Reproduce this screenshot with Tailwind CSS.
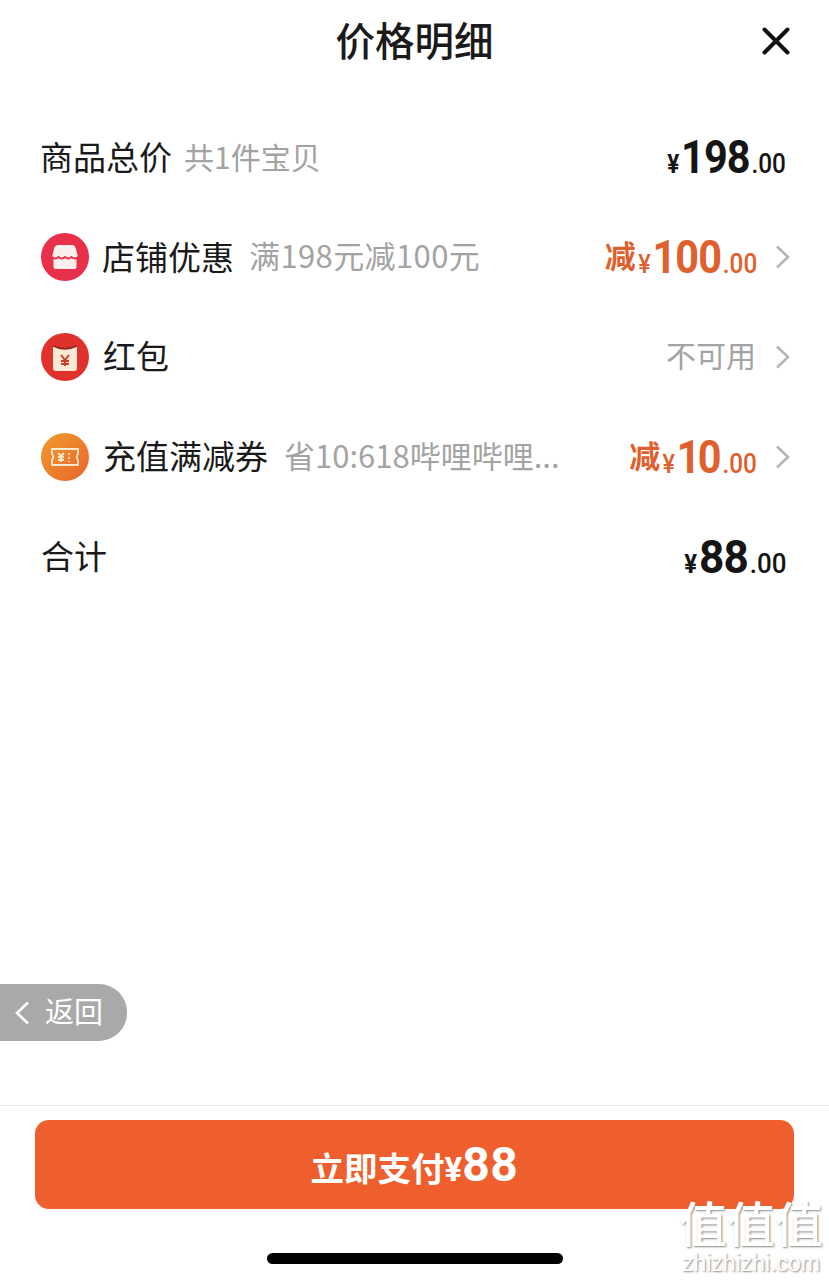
<!DOCTYPE html>
<html lang="zh-CN">
  <head>
    <meta charset="UTF-8" />
    <title>价格明细</title>
    <script src="https://cdn.jsdelivr.net/npm/@tailwindcss/browser@4"></script>
  </head>
  <body class="bg-white">
    <div class="relative w-[829px] h-[1281px] flex flex-col font-['Noto_Sans_CJK_SC',sans-serif] text-[#1a1a1a] overflow-hidden">
      <!-- Header -->
      <div class="relative h-[83px] flex items-center justify-center">
        <h1 class="text-[39.500px] leading-none font-medium pb-[6px]">价格明细</h1>
        <svg class="absolute left-[762px] top-[27px]" width="28" height="28" viewBox="0 0 28 28" fill="none" stroke="#111" stroke-width="4" stroke-linecap="round">
          <path d="M2.500 2.500 25.500 25.500M25.500 2.500 2.500 25.500" />
        </svg>
      </div>

      <!-- Rows -->
      <div class="mt-[24px] px-[41px] flex flex-col">
        <div class="h-[100px] flex items-center">
          <span class="-ml-[1px] text-[33px] leading-none pb-[2px]">商品总价</span>
          <span class="ml-[12px] text-[30px] leading-none text-[#a3a3a3] pb-[3px]">共1件宝贝</span>
          <div class="ml-auto mr-[2px] flex items-baseline origin-right scale-x-[0.9] font-['Roboto',sans-serif] font-bold text-[#151515]">
            <span class="text-[25px] leading-none">¥</span>
            <span class="text-[46px] leading-none tracking-[-1px] ml-[2px]">198</span>
            <span class="text-[27px] font-medium leading-none ml-[2px]">.00</span>
          </div>
        </div>

        <div class="h-[100px] flex items-center">
          <div class="w-[48px] h-[48px] rounded-full bg-[#e8304a] flex items-center justify-center shrink-0">
            <svg width="26" height="26" viewBox="0 0 26 26">
              <path d="M6 1h14q3 0 4 4l1.500 6q.5 3-1 3v9q0 2-2 2H3.500q-2 0-2-2v-9q-1.500 0-1-3L2 5q1-4 4-4z" fill="#fdf0ec" />
              <path d="M0 13q3.250 3 6.500 0 3.250 3 6.500 0 3.250 3 6.500 0 3.250 3 6.500 0" fill="none" stroke="#e8304a" stroke-width="1.800" />
            </svg>
          </div>
          <span class="ml-[13px] text-[33px] leading-none pb-[2px]">店铺优惠</span>
          <span class="ml-[15px] text-[31px] leading-none tracking-[0.4px] text-[#a3a3a3] pb-[6px]">满198元减100元</span>
          <span class="ml-auto text-[31px] leading-none font-bold text-[#e0602d] pb-[6px]">减</span>
          <div class="-ml-[11px] flex items-baseline origin-right scale-x-[0.9] font-['Roboto',sans-serif] font-bold text-[#e0602d]">
            <span class="text-[26px] font-medium leading-none">¥</span>
            <span class="text-[46px] leading-none tracking-[-1px] ml-[2px]">100</span>
            <span class="text-[27px] font-medium leading-none ml-[2px]">.00</span>
          </div>
          <svg class="ml-[18px] -mr-[2px]" width="15" height="24" viewBox="0 0 15 24" fill="none" stroke="#b5b5b5" stroke-width="2.600">
            <path d="M2 1.500 13 12 2 22.500" />
          </svg>
        </div>

        <div class="h-[100px] flex items-center">
          <div class="w-[48px] h-[48px] rounded-full bg-[#e0312c] flex items-center justify-center shrink-0">
            <svg width="24" height="27" viewBox="0 0 24 27">
              <path d="M0 2q12 6 24 0v22q0 3-3 3H3q-3 0-3-3z" fill="#fbe9d4" />
              <path d="M0 2q12 6 24 0" fill="none" stroke="#7c2a1c" stroke-width="1.400" />
              <path d="M8 11 12 16 16 11M12 16v6M8 17h8M8 20h8" fill="none" stroke="#c9402b" stroke-width="2" />
            </svg>
          </div>
          <span class="ml-[14px] text-[33px] leading-none pb-[3px]">红包</span>
          <span class="ml-auto text-[30px] leading-none text-[#a3a3a3] pb-[6px]">不可用</span>
          <svg class="ml-[19px] -mr-[2px]" width="15" height="24" viewBox="0 0 15 24" fill="none" stroke="#b5b5b5" stroke-width="2.600">
            <path d="M2 1.500 13 12 2 22.500" />
          </svg>
        </div>

        <div class="h-[100px] flex items-center">
          <div class="w-[48px] h-[48px] rounded-full bg-gradient-to-br from-[#f09a2e] to-[#e8642c] flex items-center justify-center shrink-0">
            <svg width="28" height="18" viewBox="0 0 28 18" fill="none" stroke="#fde9cf" stroke-width="1.800">
              <path d="M1 1h26v5q-2.500 3 0 6v5H1v-5q2.500-3 0-6z" />
              <path d="M7 5l3 3 3-3M10 8v6M7 9h6M7 12h6M18 5v2M18 9v2M18 13v1" />
            </svg>
          </div>
          <span class="ml-[14px] text-[33px] leading-none pb-[3px]">充值满减券</span>
          <span class="ml-[16px] text-[31px] leading-none text-[#a3a3a3] whitespace-nowrap pb-[6px]">省10:618哔哩哔哩...</span>
          <span class="ml-auto text-[31px] leading-none font-bold text-[#e0602d] pb-[6px]">减</span>
          <div class="-ml-[8px] flex items-baseline origin-right scale-x-[0.9] font-['Roboto',sans-serif] font-bold text-[#e0602d]">
            <span class="text-[26px] font-medium leading-none">¥</span>
            <span class="text-[46px] leading-none tracking-[-3px] ml-[2px]">10</span>
            <span class="text-[27px] font-medium leading-none ml-[4px]">.00</span>
          </div>
          <svg class="ml-[18px] -mr-[2px]" width="15" height="24" viewBox="0 0 15 24" fill="none" stroke="#b5b5b5" stroke-width="2.600">
            <path d="M2 1.500 13 12 2 22.500" />
          </svg>
        </div>

        <div class="h-[100px] flex items-center">
          <span class="text-[33px] leading-none pb-[3px]">合计</span>
          <div class="ml-auto mr-[2px] flex items-baseline origin-right scale-x-[0.96] font-['Roboto',sans-serif] font-bold text-[#151515]">
            <span class="text-[25px] leading-none">¥</span>
            <span class="text-[46px] leading-none tracking-[-1px] ml-[2px]">88</span>
            <span class="text-[27px] font-medium leading-none ml-[2px]">.00</span>
          </div>
        </div>
      </div>

      <!-- Footer -->
      <div class="mt-auto border-t border-[#e8e8e8] h-[176px] px-[35px] pt-[14px] flex flex-col items-center">
        <button class="w-[759px] h-[89px] rounded-[14px] bg-[#ef5f2d] text-white flex items-baseline justify-center pt-[21px] font-bold">
          <span class="text-[33.500px] leading-none">立即支付</span>
          <span class="text-[33px] leading-none font-['Roboto',sans-serif]">¥</span>
          <span class="text-[48px] leading-none font-['Roboto',sans-serif] tracking-[0.5px]">88</span>
        </button>
        <div class="mt-[44px] w-[296px] h-[11px] rounded-full bg-black"></div>
      </div>

      <!-- Back pill -->
      <div class="absolute left-0 top-[984px] w-[127px] h-[57px] rounded-r-[28px] bg-[#a9a9a9] text-white flex items-center pl-[15px]">
        <svg width="15" height="24" viewBox="0 0 15 24" fill="none" stroke="#fff" stroke-width="2.600">
          <path d="M13 1.500 2 12 13 22.500" />
        </svg>
        <span class="ml-[15px] text-[29px] leading-none pb-[4px]">返回</span>
      </div>

      <!-- Watermark -->
      <div class="absolute left-[678px] top-[1197px] w-[146px] flex flex-col items-center text-white [text-shadow:1px_1px_2px_#8a8a8a]">
        <span class="text-[48px] leading-none font-medium whitespace-nowrap">值值值</span>
        <span class="text-[23px] leading-none mt-[7px] font-['Liberation_Sans',sans-serif] whitespace-nowrap">zhizhizhi.com</span>
      </div>
    </div>
  </body>
</html>
